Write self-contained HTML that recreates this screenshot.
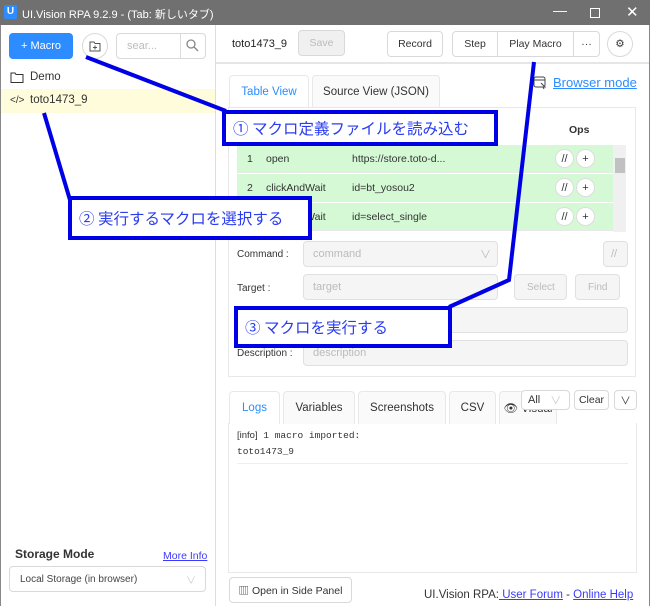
<!DOCTYPE html>
<html><head><meta charset="utf-8"><style>
*{box-sizing:border-box;margin:0;padding:0}
body{width:650px;height:606px;overflow:hidden;font-family:"Liberation Sans","Noto Sans CJK JP",sans-serif;font-size:11px;color:#333;background:#fff;position:relative}
.abs{position:absolute}
.btn{position:absolute;border:1px solid #d9d9d9;border-radius:4px;background:#fff;font-size:10.5px;display:flex;align-items:center;justify-content:center;color:#333}
.inp{position:absolute;border:1px solid #e0e0e0;border-radius:4px;background:#f5f5f5;color:#bbb;font-size:11px;padding-left:9px;display:flex;align-items:center}
.lbl{position:absolute;font-size:10px;color:#333}
.row{position:absolute;left:237px;width:376px;height:28px;background:#d4f9d4;border-bottom:1px solid #e8e8e8;font-size:10.5px}
.row span{position:absolute;top:8px}
.cir{position:absolute;width:19px;height:19px;border-radius:50%;background:#fff;border:1px solid #ddd;font-size:11px;display:flex;align-items:center;justify-content:center;top:4px}
.tab{position:absolute;border:1px solid #e8e8e8;border-bottom:none;border-radius:4px 4px 0 0;background:#fafafa;font-size:11.5px;display:flex;align-items:center;justify-content:center;color:#333}
.ann{position:absolute;border:4px solid #0000e6;background:#fff;color:#2a3cf0;font-size:15.5px;padding-left:7px;display:flex;align-items:center;font-family:"Noto Sans CJK JP",sans-serif}
</style></head><body>
<div class="abs" style="left:0;top:0;width:650px;height:25px;background:#707070"></div>
<div class="abs" style="left:4px;top:5px;width:13px;height:14px;background:#2d8cff;border-radius:2px;color:#fff;font-size:10px;font-weight:bold;text-align:center;line-height:14px">U</div>
<div class="abs" style="left:22px;top:6px;color:#fff;font-size:11px">UI.Vision RPA 9.2.9 - (Tab: 新しいタブ)</div>
<div class="abs" style="left:553px;top:2px;color:#fff;font-size:14px">—</div>
<div class="abs" style="left:590px;top:8px;width:10px;height:10px;border:1px solid #fff"></div>
<div class="abs" style="left:626px;top:3px;color:#fff;font-size:15px">✕</div>
<div class="abs" style="left:0;top:25px;width:1px;height:581px;background:#888"></div>
<div class="abs" style="left:649px;top:25px;width:1px;height:581px;background:#888"></div>
<div class="abs" style="left:215px;top:25px;width:1px;height:581px;background:#ddd"></div>
<div class="btn" style="left:9px;top:33px;width:64px;height:26px;background:#2d8cff;border-color:#2d8cff;color:#fff;font-size:11px">+ Macro</div>
<div class="btn" style="left:82px;top:33px;width:26px;height:26px;border-radius:50%"><svg width="12" height="11" viewBox="0 0 12 11"><path d="M1 1h4l1 1.5h5v7.5h-10z" fill="none" stroke="#555"/><path d="M6 4.5v4M4 6.5h4" stroke="#555"/></svg></div>
<div class="btn" style="left:116px;top:33px;width:90px;height:26px;justify-content:flex-start;padding-left:10px;color:#bbb;font-size:11px">sear...</div>
<div class="abs" style="left:180px;top:34px;width:1px;height:24px;background:#ddd"></div>
<svg class="abs" style="left:186px;top:39px" width="13" height="13"><circle cx="5" cy="5" r="4" fill="none" stroke="#888" stroke-width="1.3"/><path d="M8 8l4 4" stroke="#888" stroke-width="1.3"/></svg>
<svg class="abs" style="left:10px;top:72px" width="14" height="11"><path d="M1 1h4l1 1.5h7v8h-12z" fill="none" stroke="#333"/></svg>
<div class="abs" style="left:30px;top:71px;font-size:11.5px">Demo</div>
<div class="abs" style="left:1px;top:89px;width:214px;height:24px;background:#fefcdb"></div>
<div class="abs" style="left:10px;top:95px;font-size:10px">&lt;/&gt;</div>
<div class="abs" style="left:30px;top:94px;font-size:11.5px">toto1473_9</div>
<div class="abs" style="left:15px;top:547px;font-size:12px;font-weight:bold;color:#333">Storage Mode</div>
<div class="abs" style="left:163px;top:550px;font-size:10.5px;color:#3a3aff;text-decoration:underline">More Info</div>
<div class="btn" style="left:9px;top:566px;width:197px;height:26px;justify-content:flex-start;padding-left:10px;font-size:10px;color:#444">Local Storage (in browser)</div>
<div class="abs" style="left:186px;top:572px;color:#ccc;font-size:10px">∨</div>
<div class="abs" style="left:216px;top:62px;width:433px;height:2px;background:#e6e6e6"></div>
<div class="abs" style="left:232px;top:38px;font-size:11px;color:#222">toto1473_9</div>
<div class="btn" style="left:298px;top:30px;width:47px;height:26px;background:#f0f0f0;color:#bbb">Save</div>
<div class="btn" style="left:387px;top:31px;width:56px;height:26px">Record</div>
<div class="btn" style="left:452px;top:31px;width:46px;height:26px;border-radius:4px 0 0 4px">Step</div>
<div class="btn" style="left:497px;top:31px;width:77px;height:26px;border-radius:0">Play Macro</div>
<div class="btn" style="left:573px;top:31px;width:27px;height:26px;border-radius:0 4px 4px 0">···</div>
<div class="btn" style="left:607px;top:31px;width:26px;height:26px;border-radius:50%">⚙</div>
<div class="tab" style="left:229px;top:75px;width:80px;height:33px;background:#fff;color:#2d8cff">Table View</div>
<div class="tab" style="left:312px;top:75px;width:128px;height:33px">Source View (JSON)</div>
<svg class="abs" style="left:533px;top:76px" width="14" height="14"><rect x="1" y="1" width="11" height="10" rx="2" fill="none" stroke="#444"/><path d="M1 4h11" stroke="#444"/><path d="M8 7l4 4-2 0 1 2" stroke="#444" fill="none"/></svg>
<div class="abs" style="left:553px;top:75px;font-size:13px;color:#2d8cff;text-decoration:underline">Browser mode</div>
<div class="abs" style="left:228px;top:107px;width:408px;height:270px;border:1px solid #e8e8e8"></div>
<div class="abs" style="left:569px;top:124px;font-weight:bold;font-size:10.5px">Ops</div>
<div class="row" style="top:145px"><span style="left:10px">1</span><span style="left:29px">open</span><span style="left:115px">https://store.toto-d...</span><div class="cir" style="left:318px">//</div><div class="cir" style="left:339px">+</div></div>
<div class="row" style="top:174px"><span style="left:10px">2</span><span style="left:29px">clickAndWait</span><span style="left:115px">id=bt_yosou2</span><div class="cir" style="left:318px">//</div><div class="cir" style="left:339px">+</div></div>
<div class="row" style="top:203px"><span style="left:10px">3</span><span style="left:29px">clickAndWait</span><span style="left:115px">id=select_single</span><div class="cir" style="left:318px">//</div><div class="cir" style="left:339px">+</div></div>
<div class="abs" style="left:613px;top:145px;width:13px;height:87px;background:#f0f0f0"></div>
<div class="abs" style="left:615px;top:158px;width:10px;height:15px;background:#c1c1c1"></div>
<div class="lbl" style="left:237px;top:249px">Command :</div>
<div class="inp" style="left:303px;top:241px;width:195px;height:26px">command</div>
<div class="abs" style="left:480px;top:246px;color:#bbb">∨</div>
<div class="inp" style="left:603px;top:241px;width:25px;height:26px;padding-left:7px">//</div>
<div class="lbl" style="left:237px;top:283px">Target :</div>
<div class="inp" style="left:303px;top:274px;width:195px;height:26px">target</div>
<div class="inp" style="left:514px;top:274px;width:53px;height:26px;padding-left:12px;font-size:10px">Select</div>
<div class="inp" style="left:575px;top:274px;width:45px;height:26px;padding-left:12px;font-size:10px">Find</div>
<div class="inp" style="left:303px;top:307px;width:325px;height:26px"></div>
<div class="lbl" style="left:237px;top:348px">Description :</div>
<div class="inp" style="left:303px;top:340px;width:325px;height:26px">description</div>
<div class="tab" style="left:229px;top:391px;width:51px;height:33px;background:#fff;color:#2d8cff">Logs</div>
<div class="tab" style="left:283px;top:391px;width:72px;height:33px">Variables</div>
<div class="tab" style="left:358px;top:391px;width:88px;height:33px">Screenshots</div>
<div class="tab" style="left:449px;top:391px;width:47px;height:33px">CSV</div>
<div class="tab" style="left:499px;top:391px;width:58px;height:33px">👁 Visual</div>
<div class="btn" style="left:521px;top:390px;width:49px;height:20px;justify-content:flex-start;padding-left:6px;font-size:11px">All <span style="color:#ccc;margin-left:10px">∨</span></div>
<div class="btn" style="left:574px;top:390px;width:35px;height:20px">Clear</div>
<div class="btn" style="left:614px;top:390px;width:23px;height:20px">∨</div>
<div class="abs" style="left:228px;top:423px;width:409px;height:150px;border:1px solid #e8e8e8;border-top:none"></div>
<div class="abs" style="left:237px;top:430px;font-size:9.5px;font-family:'Liberation Mono',monospace"><span style="font-family:'Liberation Sans'">[info]</span> 1 macro imported:</div>
<div class="abs" style="left:237px;top:446px;font-size:9.5px;font-family:'Liberation Mono',monospace">toto1473_9</div>
<div class="abs" style="left:237px;top:463px;width:391px;height:1px;background:#eee"></div>
<div class="btn" style="left:229px;top:577px;width:123px;height:26px;font-size:10.5px">▥ Open in Side Panel</div>
<div class="abs" style="left:424px;top:589px;font-size:11.5px">UI.Vision RPA:<span style="color:#3a3aff;text-decoration:underline"> User Forum</span> - <span style="color:#3a3aff;text-decoration:underline"> Online Help</span></div>
<svg class="abs" style="left:0;top:0" width="650" height="606"><g stroke="#0000e6" stroke-width="4" fill="none">
<path d="M86 57L226 111"/><path d="M44 113L70 200"/><path d="M534 62L509 280L449 307"/></g></svg>
<div class="ann" style="left:222px;top:110px;width:276px;height:36px">① マクロ定義ファイルを読み込む</div>
<div class="ann" style="left:68px;top:196px;width:244px;height:44px">② 実行するマクロを選択する</div>
<div class="ann" style="left:234px;top:306px;width:218px;height:42px">③ マクロを実行する</div>
</body></html>
